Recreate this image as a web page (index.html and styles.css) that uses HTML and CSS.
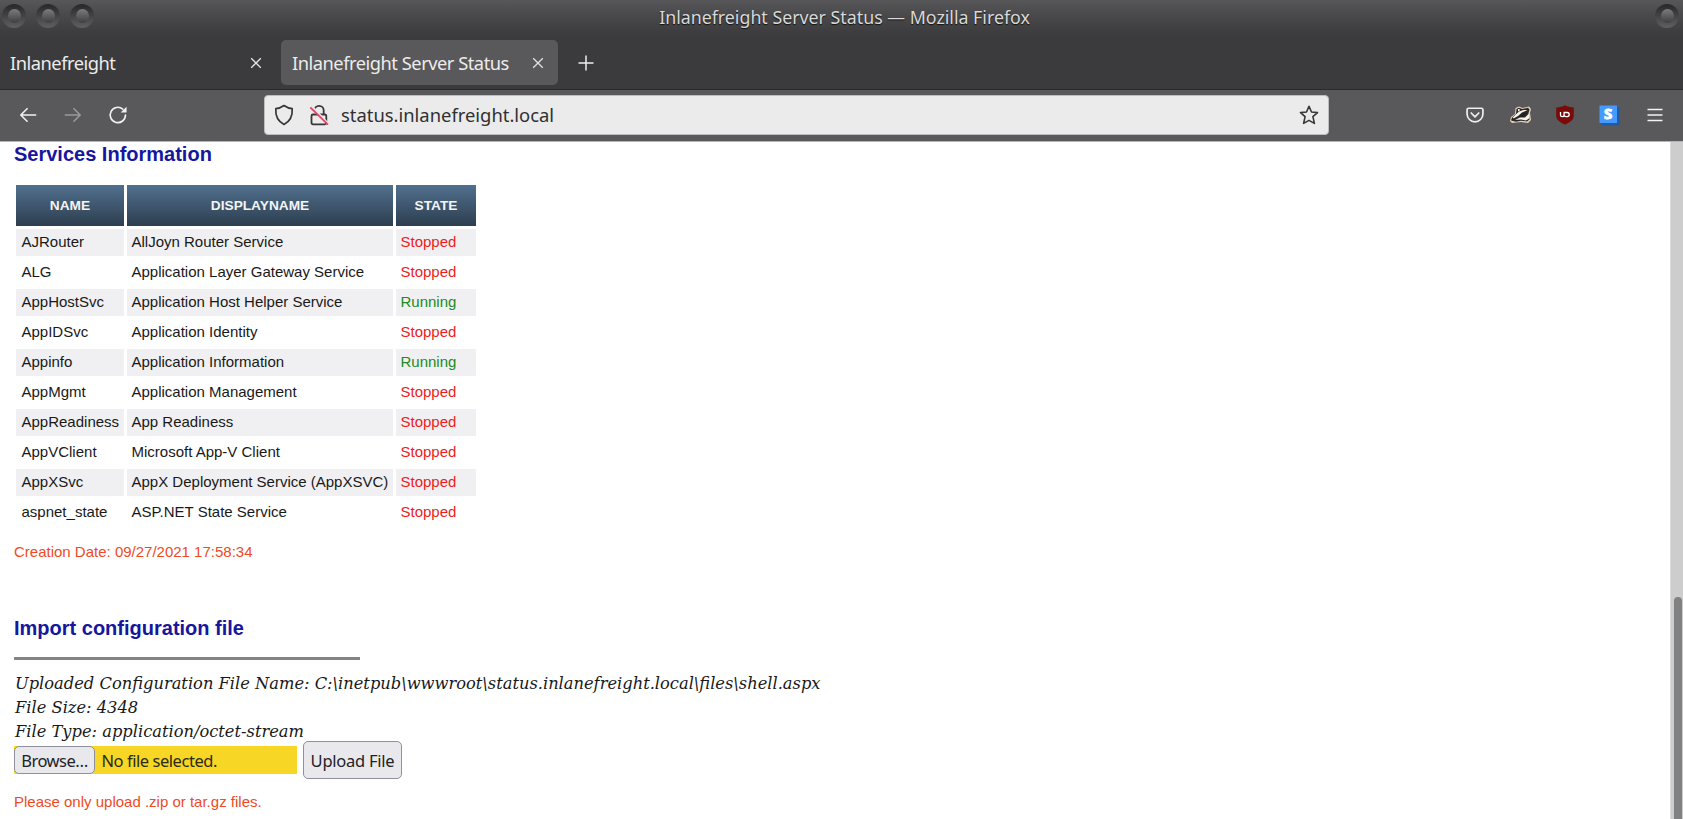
FILE: index.html
```html
<!DOCTYPE html>
<html lang="en">
<head>
<meta charset="utf-8">
<title>Inlanefreight Server Status</title>
<link rel="stylesheet" href="styles.css">
</head>
<body>
<header class="chrome">
  <div class="titlebar">
    <div class="lights"><i class="light"></i><i class="light"></i><i class="light"></i></div>
    <div class="window-title">Inlanefreight Server Status — Mozilla Firefox</div>
    <i class="light"></i>
  </div>
  <div class="tabs">
    <div class="tab tab-first"><span class="tab-label">Inlanefreight</span>
      <svg class="close" viewBox="0 0 12 12"><path d="M1.200 1.200l9.600 9.600M10.800 1.200l-9.600 9.600"/></svg></div>
    <div class="tab tab-active"><span class="tab-label">Inlanefreight Server Status</span>
      <svg class="close" viewBox="0 0 12 12"><path d="M1.200 1.200l9.600 9.600M10.800 1.200l-9.600 9.600"/></svg></div>
    <svg class="plus" viewBox="0 0 16 16"><path d="M8 .5v15M.5 8h15"/></svg>
  </div>
  <div class="toolbar">
    <div class="nav">
      <svg class="nav-icon" viewBox="0 0 20 20"><path d="M18.500 10H2M9 3L2 10l7 7"/></svg>
      <svg class="nav-icon dim" viewBox="0 0 20 20"><path d="M1.500 10H18M11 3l7 7-7 7"/></svg>
      <svg class="nav-icon" viewBox="0 0 20 20"><path d="M18.300 10a8.500 8.500 0 1 1-3-6.500"/><path class="solid" d="M19.500.8v6.500h-6.500z"/></svg>
    </div>
    <div class="urlbar">
      <svg class="shield" viewBox="0 0 20 22"><path d="M10 1.500C7.500 3.300 4.700 4.400 1.800 4.700 1.300 12 4.400 17.500 10 20.500c5.600-3 8.700-8.500 8.200-15.800C15.300 4.400 12.500 3.300 10 1.500z"/></svg>
      <svg class="lock" viewBox="0 0 20 22"><path d="M5.500 6.500a4.600 4.600 0 0 1 9.200 0V10M3.500 10.500h12.300q1.500 0 1.500 1.500v6.800q0 1.500-1.500 1.500H4q-1.500 0-1.500-1.500V12q0-1.500 1.500-1.500"/><path class="slash-gap" d="M3 2.500l16 17"/><path class="slash" d="M1.300 3.300l17.700 17.400"/></svg>
      <span class="url">status.inlanefreight.local</span>
      <svg class="star" viewBox="0 0 20 20"><path d="M10 1.300l2.500 5.700 6 .6-4.600 4.100 1.500 6.700-5.400-3-5.400 3 1.500-6.700L1.500 7.600l6-.6z"/></svg>
    </div>
    <div class="extensions">
      <svg class="ext pocket" viewBox="0 0 20 20"><path d="M3 2.500h14q1.800 0 1.800 1.800v4.500a8.800 8.800 0 0 1-17.600 0V4.300Q1.200 2.500 3 2.500zM5.800 7.800l4.200 4.200 4.200-4.200"/></svg>
      <svg class="ext badger" viewBox="0 0 21 18"><path fill="#ecd0ae" d="M0 15l1-4 4-3 .5-6L9 .5l3.500 1.500L19 .5l2 2.500-1 4 1 7-3 3-7-1-5 .5-4 .5z"/><path fill="#2a2828" d="M1.200 14.500L2 11.500 6 8l.5-5 2.300-1.200 3.400 1.300L18 1.800l1.500 1.800-1 3.400 1 6.500-2.500 2-6-.8-5 1z"/><path fill="#f7f4ee" d="M2.500 11.700L9 5.500l4.500-1.600 4 .2-5.500 2.400L8 10l-4.500 2.500zM5 14l5-2.500h5l4-4v5l-3 2-5-1zM8 3l1.500 0 .5 1.300L8 5.500z"/><path fill="#222" d="M9 10.200l4.500-3.200 3 0-2.500 3.500-4 .6zM1.500 13l2-.8.500 1.300-2 1z"/></svg>
      <svg class="ext ublock" viewBox="0 0 20 20"><path fill="#790b0b" d="M10 .3C7.500 1.800 4.500 2.300 1.200 2.500v8.300c0 4.500 4.300 6.500 8.800 8.900 4.500-2.400 8.800-4.400 8.800-8.900V2.500C15.500 2.300 12.500 1.800 10 .3z"/><path class="ub-line" d="M5.500 6.900v3.200q0 1.600 1.700 1.600t1.900-1.600V7.500h3a2.100 2.100 0 0 1 0 4.200h-1.100q-1.900 0-1.900-1.600"/></svg>
      <svg class="ext session" viewBox="0 0 21 21"><path fill="#225aa5" d="M18 1l2.500 2.500v17H3.500L1 18z"/><path fill="#459aff" d="M.5.5H18V18H.5z"/><text class="s-mark" x="9.200" y="14" text-anchor="middle">S</text></svg>
      <svg class="ext menu" viewBox="0 0 16 14"><path d="M.5 1.500h15M.5 7h15M.5 12.500h15"/></svg>
    </div>
  </div>
</header>
<div class="viewport">
  <main class="page">
    <h2 class="heading">Services Information</h2>
    <table class="services">
      <thead><tr><th class="c-name">NAME</th><th class="c-display">DISPLAYNAME</th><th class="c-state">STATE</th></tr></thead>
      <tbody>
        <tr><td>AJRouter</td><td>AllJoyn Router Service</td><td class="stopped">Stopped</td></tr>
        <tr><td>ALG</td><td>Application Layer Gateway Service</td><td class="stopped">Stopped</td></tr>
        <tr><td>AppHostSvc</td><td>Application Host Helper Service</td><td class="running">Running</td></tr>
        <tr><td>AppIDSvc</td><td>Application Identity</td><td class="stopped">Stopped</td></tr>
        <tr><td>Appinfo</td><td>Application Information</td><td class="running">Running</td></tr>
        <tr><td>AppMgmt</td><td>Application Management</td><td class="stopped">Stopped</td></tr>
        <tr><td>AppReadiness</td><td>App Readiness</td><td class="stopped">Stopped</td></tr>
        <tr><td>AppVClient</td><td>Microsoft App-V Client</td><td class="stopped">Stopped</td></tr>
        <tr><td>AppXSvc</td><td>AppX Deployment Service (AppXSVC)</td><td class="stopped">Stopped</td></tr>
        <tr><td>aspnet_state</td><td>ASP.NET State Service</td><td class="stopped">Stopped</td></tr>
      </tbody>
    </table>
    <p class="note created">Creation Date: 09/27/2021 17:58:34</p>
    <h2 class="heading import-heading">Import configuration file</h2>
    <hr class="rule">
    <div class="upload-info">
      <div>Uploaded Configuration File Name: C:\inetpub\wwwroot\status.inlanefreight.local\files\shell.aspx</div>
      <div>File Size: 4348</div>
      <div>File Type: application/octet-stream</div>
    </div>
    <div class="upload-form">
      <div class="file-field"><button class="btn browse">Browse…</button><span class="file-status">No file selected.</span></div>
      <button class="btn submit">Upload File</button>
    </div>
    <p class="note hint">Please only upload .zip or tar.gz files.</p>
  </main>
  <div class="scrollbar"><div class="thumb"></div></div>
</div>
</body>
</html>
```
FILE: styles.css
```css
* { box-sizing: border-box; }
body { margin: 0; height: 819px; overflow: hidden; display: flex; flex-direction: column; background: #fff; font-family: "Liberation Sans", Arial, sans-serif; }
svg { display: block; flex: none; fill: none; overflow: visible; }

.chrome { flex: none; height: 142px; background: linear-gradient(#575759 0, #49494b 15px, #3d3d3f 33px, #3b3b3d 38px); font-family: "Noto Sans", sans-serif; color: #ececec; border-bottom: 1px solid #b5b5b6; }
.titlebar { height: 35px; display: flex; align-items: flex-start; justify-content: space-between; padding: 4px 4px 0 2px; }
.lights { display: flex; gap: 10px; }
.light { width: 24px; height: 24px; border-radius: 50%; flex: none; background: linear-gradient(#272729, #606062); display: grid; place-items: center; }
.light::after { content: ""; width: 13px; height: 14px; border-radius: 50%; background: linear-gradient(#7c7c7e, #3e3e40); }
.window-title { font-size: 17.800px; line-height: 26px; color: #d9d9d9; text-shadow: 0 1px 1px #111; white-space: nowrap; margin-left: -60px; }
.tabs { height: 55px; display: flex; padding-top: 5px; border-bottom: 1px solid #2a2a2c; }
.tab { height: 45px; display: flex; align-items: center; justify-content: space-between; }
.tab-first { width: 281px; padding: 0 19px 0 10px; }
.tab-active { width: 277px; padding: 0 14px 0 11px; background: #59595b; border-radius: 5px; }
.tab-label { font-size: 18.300px; letter-spacing: -.48px; line-height: 45px; white-space: nowrap; }
.close { width: 12px; height: 12px; stroke: #e2e2e2; stroke-width: 1.300; }
.plus { width: 16px; height: 16px; margin: 15px 0 0 20px; stroke: #efefef; stroke-width: 1.500; }
.toolbar { height: 51px; background: #59595b; display: flex; align-items: center; padding-bottom: 1px; }
.nav { width: 264px; display: flex; gap: 27px; padding-left: 19px; }
.nav-icon { width: 18px; height: 18px; stroke: #f1f1f1; stroke-width: 1.800; stroke-linecap: round; stroke-linejoin: round; }
.nav-icon .solid { fill: #f1f1f1; stroke: none; }
.dim { opacity: .42; }
.urlbar { width: 1065px; height: 40px; display: flex; align-items: center; background: #ebebeb; border: 1px solid #bdbdbe; border-radius: 4px; padding: 0 9px; stroke: #37373a; }
.shield { width: 20px; height: 22px; stroke-width: 1.700; stroke-linejoin: round; }
.lock { width: 20px; height: 22px; margin-left: 15px; stroke-width: 1.800; }
.slash-gap { stroke: #ebebeb; stroke-width: 2; }
.slash { stroke: #e34466; stroke-width: 1.800; }
.url { flex: 1; margin-left: 12px; font-size: 18.400px; line-height: 38px; color: #303033; stroke: none; }
.star { width: 20px; height: 20px; stroke-width: 1.600; stroke-linejoin: round; }
.extensions { flex: 1; display: flex; align-items: center; padding-left: 137px; }
.ext { width: 20px; height: 20px; }
.pocket { width: 18px; height: 18px; stroke: #eee; stroke-width: 1.900; stroke-linecap: round; stroke-linejoin: round; }
.badger { width: 21px; height: 18px; margin-left: 26px; }
.ublock { margin-left: 24px; }
.ub-line { stroke: #fff; stroke-width: 1.300; }
.session { width: 21px; height: 21px; margin-left: 24px; }
.s-mark { font: bold 15px "Open Sans", sans-serif; fill: #fff; stroke: #fff; stroke-width: 1; }
.menu { width: 16px; height: 14px; margin-left: 27px; stroke: #f3f3f3; stroke-width: 1.500; }

.viewport { flex: 1; display: flex; min-height: 0; }
.page { flex: 1; padding-left: 14px; }
.heading { margin: 0; font-size: 20px; line-height: 24px; font-weight: bold; color: #16169e; }
.services { border-collapse: separate; border-spacing: 3px 3px; table-layout: fixed; width: 466px; margin-top: 16px; font-size: 15px; color: #191919; margin-left: -1px; }
.services th { height: 41px; padding: 0 0 1px; font-size: 13.700px; color: #f4f4f4; background: linear-gradient(#51708e, #2d3e4f); text-align: center; }
.c-name { width: 108px; }
.c-display { width: 266px; }
.services td { height: 27px; padding: 0 4px 2px 4.500px; line-height: 25px; white-space: nowrap; }
.services td:first-child { padding-left: 5.500px; }
.services tbody tr:nth-child(odd) td { background: #f0f0f2; }
.services .stopped { color: #ee1c1c; }
.services .running { color: #228b22; }
.note { margin: 0; font-size: 15px; line-height: 20px; color: #ee4b25; }
.created { margin-top: 13px; }
.import-heading { margin-top: 54px; }
.rule { width: 346px; height: 3px; margin: 17px 0 12px; border: 0; background: #848484; }
.upload-info { font-family: "DejaVu Serif", serif; font-style: italic; font-size: 16.280px; line-height: 24px; color: #191919; white-space: nowrap; padding-left: 1px; }
.upload-form { display: flex; align-items: center; gap: 6px; height: 38px; margin-top: -3px; }
.file-field { width: 283px; height: 28px; background: #f8d626; display: flex; align-items: center; font: 16.500px "Noto Sans", sans-serif; color: #2b2b14; }
.btn { font: 16.500px "Noto Sans", sans-serif; color: #222225; background: #e9e9ed; border: 1px solid #8f8f9d; border-radius: 5px; padding: 0; white-space: nowrap; }
.browse { width: 81px; height: 28px; line-height: 25px; letter-spacing: -.5px; }
.file-status { margin-left: 6.500px; letter-spacing: -.45px; }
.submit { width: 99px; height: 38px; letter-spacing: -.25px; }
.hint { margin-top: 13px; }
.scrollbar { width: 13px; background: #cdcdcd; border-left: 1px solid #dcdcdc; display: flex; justify-content: flex-end; }
.thumb { width: 8px; margin: 455px 1px 0 0; background: #808182; border-radius: 4px 4px 0 0; }
```
